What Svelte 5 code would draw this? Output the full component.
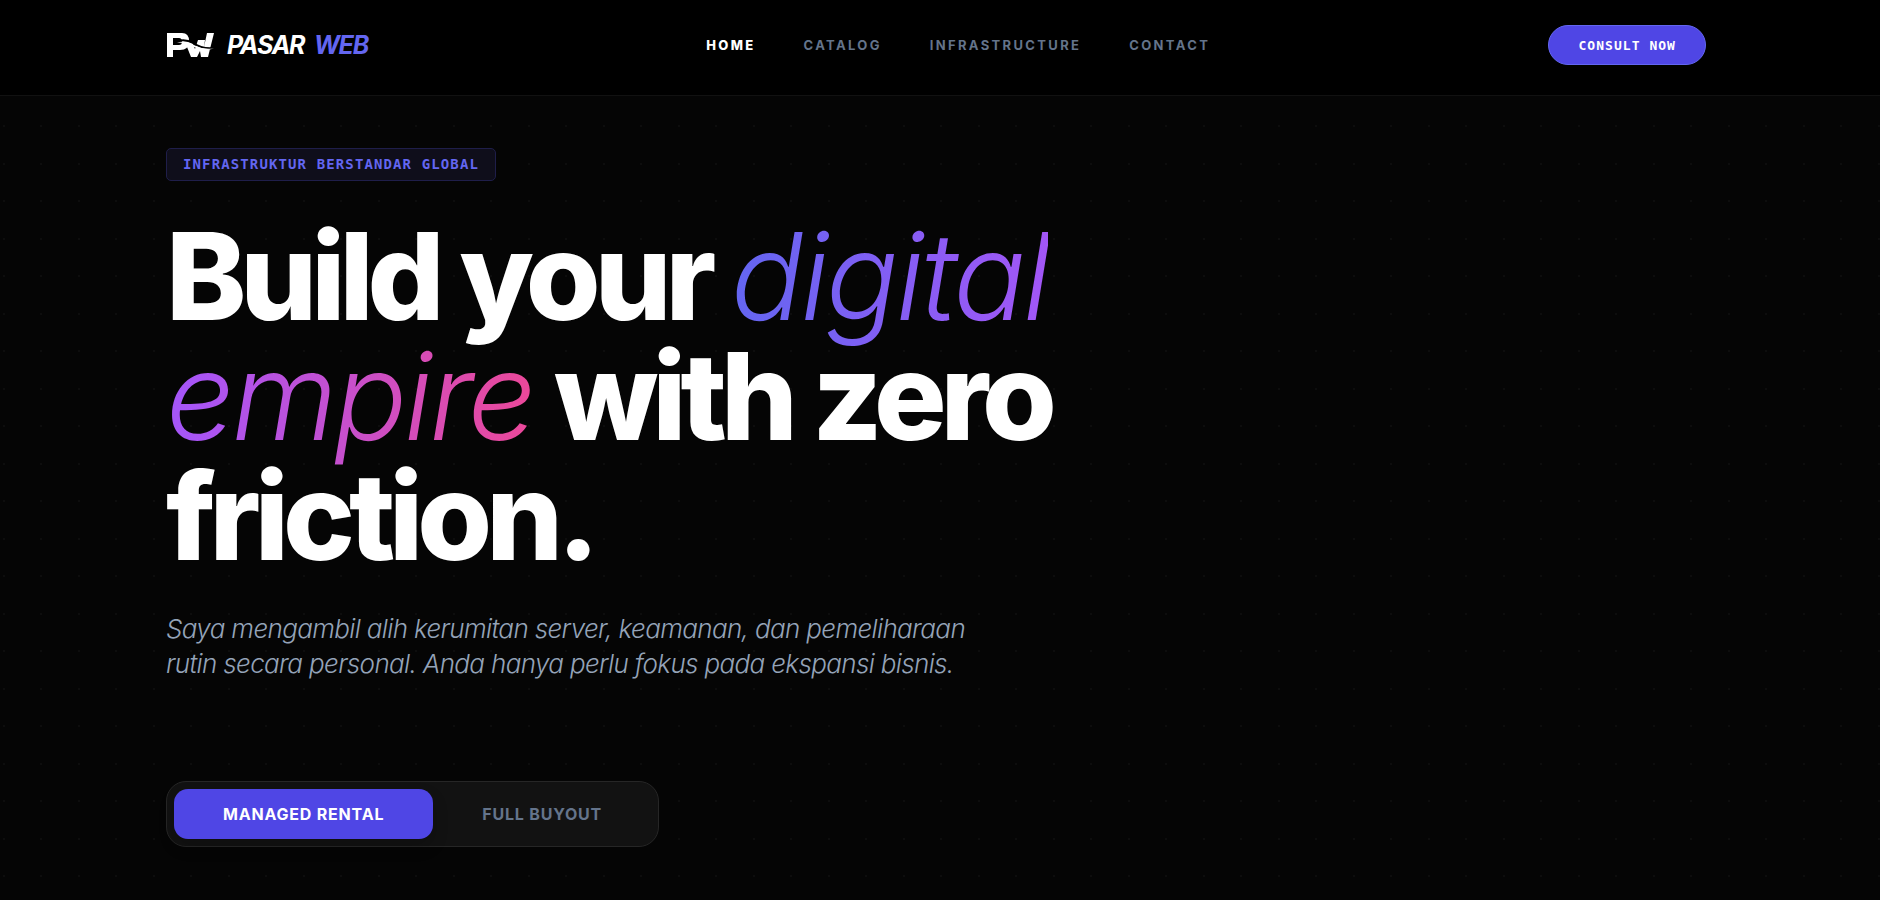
<script lang="ts">
  interface NavLink {
    label: string;
    href: string;
  }

  const links: NavLink[] = [
    { label: 'Home', href: '#home' },
    { label: 'Catalog', href: '#catalog' },
    { label: 'Infrastructure', href: '#infrastructure' },
    { label: 'Contact', href: '#contact' },
  ];

  const plans = ['Managed Rental', 'Full Buyout'];

  let current = $state('Home');
  let plan = $state('Managed Rental');
</script>

<div class="page">
  <header class="topbar">
    <div class="container bar">
      <a class="brand" href="#home">
        <svg class="mark" viewBox="-1 -1 48 26" aria-hidden="true">
          <path
            fill="#fff"
            fill-rule="evenodd"
            d="M0 0H15Q22 0 22 8Q22 17 13 17H6V24H0ZM6 5V12H12Q15 12 15 8.5Q15 5 12 5Z"
          />
          <path
            fill="#fff"
            d="M18 9H25L28 16L31 7H38L37 14L40 0H47L41 24H34L33 18L30 24H24Z"
          />
          <path
            fill="none"
            stroke="#000"
            stroke-width="2"
            d="M11 8Q19 6 26 10Q35 16 46 15"
          />
          <path fill="#fff" d="M10 9.500Q18 7 27 12Q36 17 47 15.500Q36 19 26 13.500Q18 9.500 10 9.500Z" />
        </svg>
        <span class="brand-name">PASAR <span class="accent">WEB</span></span>
      </a>

      <nav class="links" aria-label="Main">
        {#each links as link}
          <a
            href={link.href}
            class:active={current === link.label}
            onclick={() => (current = link.label)}
          >
            {link.label}
          </a>
        {/each}
      </nav>

      <button type="button" class="consult">Consult Now</button>
    </div>
  </header>

  <main class="container hero">
    <p class="badge">Infrastruktur Berstandar Global</p>
    <h1>Build your <em>digital empire</em> with zero friction.</h1>
    <p class="lead">
      Saya mengambil alih kerumitan server, keamanan, dan pemeliharaan rutin secara personal. Anda
      hanya perlu fokus pada ekspansi bisnis.
    </p>

    <div class="switch" role="group" aria-label="Plan">
      {#each plans as name}
        <button
          type="button"
          class:selected={plan === name}
          aria-pressed={plan === name}
          onclick={() => (plan = name)}
        >
          {name}
        </button>
      {/each}
    </div>
  </main>
</div>

<style>
  :global(body) {
    margin: 0;
    background: #050505;
  }
  .page {
    box-sizing: border-box;
    min-height: 100vh;
    padding-right: 8px;
    font-family: Inter, 'Liberation Sans', sans-serif;
    color: #fff;
    background-color: #050505;
    /* Dots sit twice per 75px tile in each direction. */
    background-image:
      radial-gradient(circle at 4px 14px, #0d0d0d 1px, transparent 1px),
      radial-gradient(circle at 41px 14px, #0d0d0d 1px, transparent 1px),
      radial-gradient(circle at 4px 51px, #0d0d0d 1px, transparent 1px),
      radial-gradient(circle at 41px 51px, #0d0d0d 1px, transparent 1px);
    background-size: 75px 75px;
  }
  .container {
    box-sizing: border-box;
    width: 100%;
    max-width: 1588px;
    margin: 0 auto;
    padding: 0 24px;
  }

  .topbar {
    margin-right: -8px;
    padding-right: 8px;
    background: #000;
    border-bottom: 1px solid #111;
  }
  .bar {
    display: flex;
    align-items: center;
    justify-content: space-between;
    padding-top: 25px;
    padding-bottom: 30px;
  }
  .brand {
    display: flex;
    align-items: center;
    gap: 13px;
    color: #fff;
    text-decoration: none;
  }
  .mark {
    width: 48px;
    height: 26px;
  }
  .brand-name {
    font-size: 25px;
    line-height: 32px;
    font-weight: 700;
    font-style: italic;
    letter-spacing: -0.05em;
  }
  .accent {
    margin-left: 5px;
    color: #6366f1;
  }
  .links {
    display: flex;
    gap: 48px;
  }
  .links a {
    font-size: 13px;
    line-height: 20px;
    font-weight: 700;
    letter-spacing: 0.18em;
    text-transform: uppercase;
    text-decoration: none;
    color: #64748b;
  }
  .links a.active {
    color: #fff;
    font-weight: 800;
  }
  .consult {
    padding: 0 29px;
    height: 40px;
    border: 1px solid #6366f1;
    border-radius: 20px;
    background: #4f46e5;
    color: #fff;
    font-family: 'DejaVu Sans Mono', monospace;
    font-size: 13px;
    font-weight: 700;
    letter-spacing: 0.08em;
    text-transform: uppercase;
    cursor: pointer;
  }

  .hero {
    display: flex;
    flex-direction: column;
    align-items: flex-start;
    padding-top: 52px;
    padding-bottom: 48px;
  }
  .badge {
    margin: 0 0 35px;
    padding: 0 16px;
    border: 1px solid #1f1e4a;
    border-radius: 5px;
    background: #0f0e1b;
    color: #6366f1;
    font-family: 'DejaVu Sans Mono', monospace;
    font-size: 14px;
    line-height: 31px;
    font-weight: 700;
    letter-spacing: 0.08em;
    text-transform: uppercase;
  }
  h1 {
    max-width: 940px;
    margin: 0;
    font-size: 121px;
    line-height: 120px;
    font-weight: 800;
    letter-spacing: -0.05em;
  }
  h1 em {
    font-weight: 300;
    letter-spacing: -0.025em;
    background: linear-gradient(to right, #6366f1, #a855f7, #ec4899);
    background-clip: text;
    -webkit-background-clip: text;
    color: transparent;
  }
  .lead {
    max-width: 830px;
    margin: 35px 0 0;
    font-size: 26px;
    line-height: 35px;
    font-weight: 300;
    font-style: italic;
    letter-spacing: -0.025em;
    color: #94a3b8;
  }
  .switch {
    display: flex;
    margin-top: 100px;
    padding: 7px;
    border: 1px solid #262626;
    border-radius: 20px;
    background: #121212;
  }
  .switch button {
    height: 50px;
    padding: 0 49px;
    border: 0;
    border-radius: 14px;
    background: transparent;
    color: #64748b;
    font-family: inherit;
    font-size: 16px;
    font-weight: 700;
    letter-spacing: 0.05em;
    text-transform: uppercase;
    cursor: pointer;
  }
  .switch button.selected {
    background: #4f46e5;
    color: #fff;
    box-shadow: 0 8px 16px rgba(0, 0, 0, 0.2);
  }
</style>
